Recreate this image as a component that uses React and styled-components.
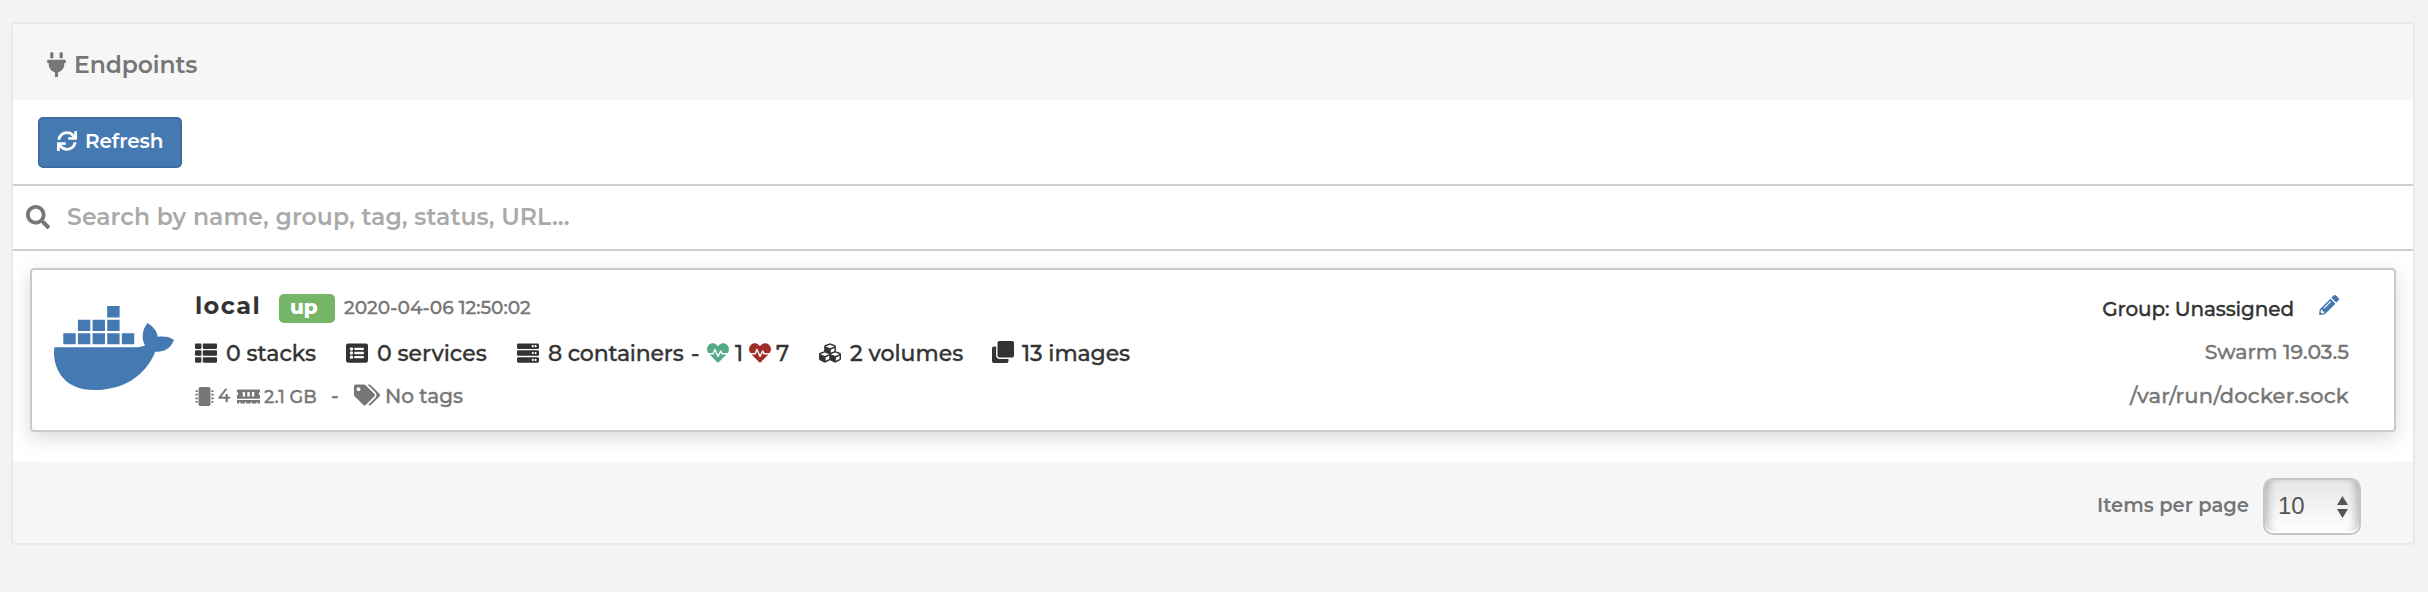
import React from 'react';
import styled, { createGlobalStyle } from 'styled-components';
import {
  FaPlug, FaSync, FaSearch, FaDocker, FaThList, FaListAlt, FaServer, FaHeartbeat,
  FaCubes, FaClone, FaMicrochip, FaMemory, FaTags, FaPencilAlt,
} from 'react-icons/fa';

const GlobalStyle = createGlobalStyle`
  * { box-sizing: border-box; }
  body {
    margin: 0;
    background: #f3f3f3;
    font-family: Montserrat, Inter, "Liberation Sans", sans-serif;
    font-weight: 500;
    color: #333;
  }
`;

const Page = styled.div`
  height: 592px;
  padding: 22px 13px 0 11px;
`;

const Widget = styled.section`
  height: 523px;
  border: 2px solid #e9e9e9;
  border-radius: 4px;
  background: #fff;
  display: flex;
  flex-direction: column;
`;

const Header = styled.header`
  height: 76px;
  padding: 4px 0 0 33px;
  background: #f6f6f6;
  display: flex;
  align-items: center;
  color: #767676;
`;

const Toolbar = styled.div`
  height: 84px;
  padding: 17px 25px 0;
`;

const RefreshButton = styled.button`
  width: 144px;
  height: 51px;
  padding: 0 0 4px 17px;
  border: 2px solid #3d6da3;
  border-radius: 5px;
  background: #4579b2;
  color: #fff;
  font: inherit;
  display: flex;
  align-items: center;
`;

const SearchBar = styled.div`
  height: 67px;
  padding: 0 13px 2px;
  border-top: 2px solid #cecece;
  border-bottom: 2px solid #cecece;
  display: flex;
  align-items: center;
  color: #767676;
`;

const Text = styled.span`
  white-space: nowrap;
  font-size: ${(p) => p.$size || 22}px;
  font-weight: ${(p) => p.$weight || 500};
  letter-spacing: ${(p) => p.$track || 0}px;
  line-height: 1.2;
  margin-left: ${(p) => p.$gap || 0}px;
  padding-top: ${(p) => p.$drop || 0}px;
  padding-bottom: ${(p) => p.$lift || 0}px;
  width: ${(p) => (p.$w ? `${p.$w}px` : 'auto')};
  color: ${(p) => p.$color || 'inherit'};
  -webkit-text-stroke: ${(p) => (p.$weight ? 0 : 0.35)}px currentColor;
`;

const Icon = styled.span`
  display: flex;
  flex: none;
  align-items: center;
  justify-content: center;
  width: ${(p) => p.$w || 22}px;
  height: 26px;
  margin-left: ${(p) => p.$gap || 0}px;
  margin-right: ${(p) => p.$after || 0}px;
  margin-bottom: ${(p) => p.$lift || 0}px;
  font-size: ${(p) => p.$size || 22}px;
  color: ${(p) => p.$color || 'inherit'};
  svg { flex: none; }
`;

const List = styled.div`
  flex: 1;
  padding: 17px 17px 0 17px;
`;

const Card = styled.article`
  height: 164px;
  border: 2px solid #cacaca;
  border-radius: 4px;
  background: #fff;
  box-shadow: 0 6px 20px rgba(60, 80, 75, 0.2);
  display: flex;
`;

const Logo = styled.div`
  width: 121px;
  margin-left: 22px;
  padding-top: 18px;
  font-size: 120px;
  color: #4579b2;
  svg { display: block; }
`;

const Details = styled.div`
  flex: 1;
  margin-left: 20px;
  padding-top: 14px;
`;

const Row = styled.div`
  display: flex;
  align-items: center;
  height: ${(p) => p.$h || 44}px;
  color: ${(p) => (p.$muted ? '#767676' : '#333')};
  justify-content: ${(p) => (p.$end ? 'flex-end' : 'flex-start')};
`;

const Stat = styled.div`
  display: flex;
  align-items: center;
  width: ${(p) => p.$w}px;
`;

const Badge = styled.span`
  width: 56px;
  height: 29px;
  margin: 2px 0 0 18px;
  padding: 0 0 3px 11px;
  border-radius: 5px;
  background: #74b566;
  color: #fff;
  display: flex;
  align-items: center;
`;

const Meta = styled.div`
  width: 340px;
  padding: 16px 45px 0 0;
`;

const Footer = styled.footer`
  height: 81px;
  padding: 0 52px 0 0;
  background: #f6f6f6;
  color: #767676;
  display: flex;
  align-items: center;
  justify-content: flex-end;
`;

const PageSize = styled.div`
  width: 98px;
  height: 57px;
  margin: 8px 0 0 14px;
  padding: 0 11px 0 13px;
  border: 2px solid #c6c6c6;
  border-radius: 10px;
  background: linear-gradient(#e6e6e6, #fff);
  box-shadow: inset 0 -2px 1px #fff, inset 9px 0 8px -6px rgba(0, 0, 0, 0.25), inset -9px 0 8px -6px rgba(0, 0, 0, 0.25);
  color: #555;
  font-family: "Liberation Sans", sans-serif;
  display: flex;
  align-items: center;
  justify-content: space-between;
`;

export default function App() {
  return (
    <Page>
      <GlobalStyle />
      <Widget>
        <Header>
          <Icon $w={20} $size={25}><FaPlug /></Icon>
          <Text $gap={8} $size={23.5} $track={-0.1} $weight={600} $drop={2}>Endpoints</Text>
        </Header>
        <Toolbar>
          <RefreshButton>
            <Icon $w={20} $size={20}><FaSync /></Icon>
            <Text $gap={8} $size={20} $weight={600} $track={-0.1}>Refresh</Text>
          </RefreshButton>
        </Toolbar>
        <SearchBar>
          <Icon $size={24} $w={24}><FaSearch /></Icon>
          <Text $gap={17} $size={23.5} $weight={600} $track={0.1} $drop={2} $color="#aaa">Search by name, group, tag, status, URL...</Text>
        </SearchBar>
        <List>
          <Card>
            <Logo><FaDocker /></Logo>
            <Details>
              <Row $h={47}>
                <Text $w={66} $size={24} $weight={700} $track={1.4} $lift={2}>local</Text>
                <Badge><Text $size={20} $weight={800}>up</Text></Badge>
                <Text $gap={9} $size={18.6} $drop={2} $color="#767676">2020-04-06 12:50:02</Text>
              </Row>
              <Row>
                <Stat $w={151}>
                  <Icon><FaThList /></Icon>
                  <Text $gap={9} $drop={2}>0 stacks</Text>
                </Stat>
                <Stat $w={171}>
                  <Icon><FaListAlt /></Icon>
                  <Text $gap={9} $drop={2}>0 services</Text>
                </Stat>
                <Stat $w={302}>
                  <Icon><FaServer /></Icon>
                  <Text $gap={9} $w={143} $track={-0.2} $drop={2}>8 containers</Text>
                  <Text $w={16} $drop={2}>-</Text>
                  <Icon $color="#54ab8a"><FaHeartbeat /></Icon>
                  <Text $gap={6} $w={14} $drop={2}>1</Text>
                  <Icon $color="#9f2c27"><FaHeartbeat /></Icon>
                  <Text $gap={5} $drop={2}>7</Text>
                </Stat>
                <Stat $w={173}>
                  <Icon><FaCubes /></Icon>
                  <Text $gap={9} $drop={2}>2 volumes</Text>
                </Stat>
                <Stat>
                  <Icon $lift={3}><FaClone /></Icon>
                  <Text $gap={8} $track={-0.1} $drop={2}>13 images</Text>
                </Stat>
              </Row>
              <Row $muted $h={42}>
                <Icon $w={18} $size={19}><FaMicrochip /></Icon>
                <Text $gap={5} $w={19} $size={18} $drop={2}>4</Text>
                <Icon $w={23} $size={23}><FaMemory /></Icon>
                <Text $gap={4} $w={67} $size={17.8} $drop={2}>2.1 GB</Text>
                <Text $w={23} $size={20}>-</Text>
                <Icon $w={25} $size={26} $lift={3}><FaTags /></Icon>
                <Text $gap={6} $size={20}>No tags</Text>
              </Row>
            </Details>
            <Meta>
              <Row $end>
                <Text $size={20} $track={-0.1} $drop={1}>Group: Unassigned</Text>
                <Icon $gap={25} $w={20} $after={10} $size={20} $lift={6} $color="#4579b2"><FaPencilAlt /></Icon>
              </Row>
              <Row $end $muted><Text $size={20.5}>Swarm 19.03.5</Text></Row>
              <Row $end $muted><Text $size={21} $track={0.25}>/var/run/docker.sock</Text></Row>
            </Meta>
          </Card>
        </List>
        <Footer>
          <Text $size={19.5} $weight={600} $drop={7}>Items per page</Text>
          <PageSize>
            <Text $size={24} $weight={400}>10</Text>
            <svg width="11" height="22" viewBox="0 0 11 22" fill="#555">
              <path d="M5.5 0L11 9H0zM0 13h11l-5.5 9z" />
            </svg>
          </PageSize>
        </Footer>
      </Widget>
    </Page>
  );
}
